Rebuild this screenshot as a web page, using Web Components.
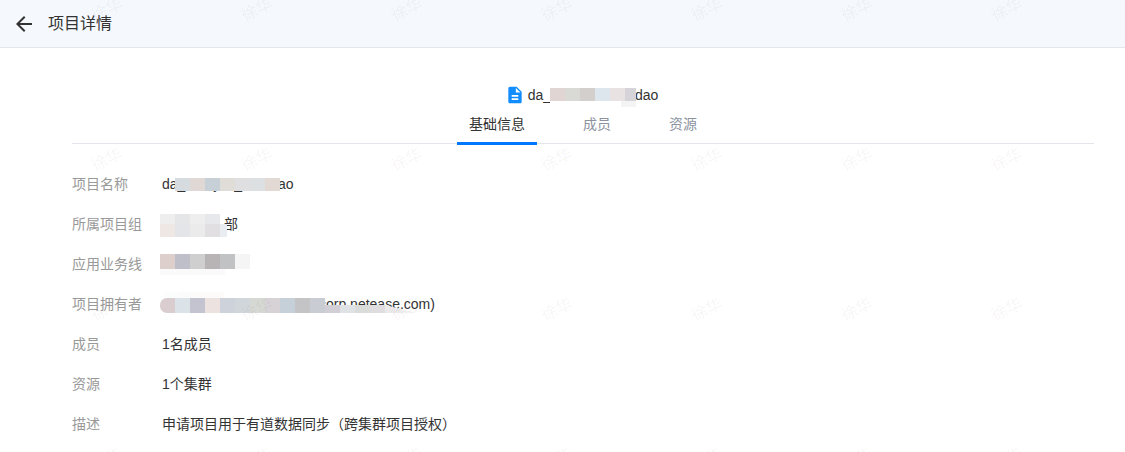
<!DOCTYPE html>
<html lang="zh-CN">
<head>
<meta charset="utf-8">
<title>项目详情</title>
<style>
  html, body {
    margin: 0;
    padding: 0;
    background: #fff;
    font-family: "Liberation Sans", "Noto Sans CJK SC", sans-serif;
    font-size: 14px;
    line-height: 20px;
    color: #333;
  }
  body { position: relative; height: 452px; overflow: hidden; }
</style>
</head>
<body>
  <page-header>项目详情</page-header>
  <detail-page>
    <project-title>
      da_xxxxyxx_xxxx<span style="margin-left:-1px">dao</span><mosaic-mask x="22" y="-7" h="13" colors="#e0d5d2,#d9d9d6,#d3cfcd,#dce6ec,#e8e3e2,#d6d4d8" w="86" strip="6" stripbg="linear-gradient(to right,#fff 0,#fff 82%,#f4f4f4 82%,#f4f4f4 100%)"></mosaic-mask>
    </project-title>
    <tab-bar>
      <tab-item active>基础信息</tab-item>
      <tab-item>成员</tab-item>
      <tab-item>资源</tab-item>
    </tab-bar>
    <info-list>
      <info-row label="项目名称">da_xxxxyxx_xxxxdao<mosaic-mask x="13" y="-6" h="13" colors="#d5dbdf,#dfd8d5,#c7d0d7,#e0dcd8,#dfdee0,#dde0e2,#e2d9d4"></mosaic-mask></info-row>
      <info-row label="所属项目组"><span style="margin-left:62px">部</span><mosaic-mask x="-2" y="-10" h="10" colors="#eeeeee,#e5e6e8,#eeeeee,#e6e8eb"></mosaic-mask><mosaic-mask x="-2" y="0" h="13" w="67" colors="#efe7e3,#e3e5e8,#ebebec,#e2dfe2,#e9ecf1"></mosaic-mask></info-row>
      <info-row label="应用业务线"><mosaic-mask x="-2" y="-10" h="15" strip="6" stripbg="#fafafa" stripw="65" colors="#dccfcc,#bfbfc9,#cfcfcf,#b8b3b5,#c1c2c4,#f5f5f5"></mosaic-mask></info-row>
      <info-row label="项目拥有者"><span style="margin-left:157px">corp.netease.com)</span><mosaic-mask x="2" y="-12" h="6" colors="#fbfcfc,#fbfbfb,#fcfbfa,#fcfbfa"></mosaic-mask><mosaic-mask x="-2" y="-6" h="15" round colors="#d9cdcf,#dbe3e9,#c4c4d0,#ece2e0,#ced3db,#d0d6da,#d6d8d3,#d6d2d6,#c6d0d9,#c4c4c6,#c9cdd3"></mosaic-mask><mosaic-mask x="163" y="1" h="8" w="92" clip="polygon(0 0,100% 0,100% 0,65% 0,100% 100%,0 100%)" colors="#d2ced6,#dfe3e6,#d9dcd9,#e0dde1,#ebe9ea,#f3f2f3,#fafafa"></mosaic-mask></info-row>
      <info-row label="成员">1名成员</info-row>
      <info-row label="资源">1个集群</info-row>
      <info-row label="描述">申请项目用于有道数据同步（跨集群项目授权）</info-row>
    </info-list>
  </detail-page>
  <water-mark text="徐华"></water-mark>

<script>
class PageHeader extends HTMLElement {
  constructor() {
    super();
    this.attachShadow({ mode: "open" }).innerHTML = `
      <style>
        :host {
          display: flex;
          align-items: center;
          gap: 12px;
          box-sizing: border-box;
          height: 48px;
          padding-left: 12px;
          background: #f5f8fc;
          border-bottom: 1px solid #e3e6ea;
          font-size: 16px;
          line-height: 22px;
          color: #333;
        }
        svg { width: 24px; height: 24px; fill: #333; display: block; }
      </style>
      <svg viewBox="0 0 24 24"><path d="M20 11H7.83l5.59-5.59L12 4l-8 8 8 8 1.41-1.41L7.83 13H20v-2z"/></svg>
      <slot></slot>
    `;
  }
}

class DetailPage extends HTMLElement {
  constructor() {
    super();
    this.attachShadow({ mode: "open" }).innerHTML = `
      <style>
        :host { display: block; padding: 35px 31px 0 72px; }
      </style>
      <slot></slot>
    `;
  }
}

class ProjectTitle extends HTMLElement {
  constructor() {
    super();
    this.attachShadow({ mode: "open" }).innerHTML = `
      <style>
        :host {
          display: flex;
          justify-content: center;
          align-items: center;
          gap: 2.3px;
          height: 24px;
          color: #333;
        }
        svg { width: 20px; height: 20px; fill: #128dff; display: block; margin-left: -2.3px; }
        .name { position: relative; white-space: nowrap; }
      </style>
      <svg viewBox="0 0 24 24"><path d="M14 2H6c-1.1 0-2 .9-2 2v16c0 1.1.9 2 2 2h12c1.1 0 2-.9 2-2V8l-6-6zm2 16H8v-2h8v2zm0-4H8v-2h8v2zm-3-5V3.5L18.5 9H13z"/></svg>
      <span class="name"><slot></slot></span>
    `;
  }
}

class TabBar extends HTMLElement {
  constructor() {
    super();
    this.attachShadow({ mode: "open" }).innerHTML = `
      <style>
        :host {
          display: flex;
          justify-content: center;
          align-items: flex-start;
          gap: 34px;
          height: 36px;
          border-bottom: 1px solid #e4e6eb;
        }
      </style>
      <slot></slot>
    `;
  }
}

class TabItem extends HTMLElement {
  constructor() {
    super();
    this.attachShadow({ mode: "open" }).innerHTML = `
      <style>
        :host {
          display: block;
          box-sizing: border-box;
          height: 38px;
          line-height: 34px;
          padding: 0 12px;
          border-bottom: 3px solid transparent;
          color: #8c93a0;
        }
        :host([active]) {
          color: #333;
          border-bottom-color: #0077ff;
        }
      </style>
      <slot></slot>
    `;
  }
}

class InfoList extends HTMLElement {
  constructor() {
    super();
    this.attachShadow({ mode: "open" }).innerHTML = `
      <style>
        :host { display: block; margin-top: 20px; }
      </style>
      <slot></slot>
    `;
  }
}

class InfoRow extends HTMLElement {
  constructor() {
    super();
    this.attachShadow({ mode: "open" }).innerHTML = `
      <style>
        :host {
          display: grid;
          grid-template-columns: 90px 1fr;
          align-items: center;
          height: 40px;
        }
        .label { color: #999; }
        .value { position: relative; min-height: 20px; color: #333; white-space: nowrap; }
      </style>
      <div class="label"></div>
      <div class="value"><slot></slot></div>
    `;
    this.shadowRoot.querySelector(".label").textContent = this.getAttribute("label");
  }
}

// pixelated block that lies over the text, like the redaction in the shot
class MosaicMask extends HTMLElement {
  connectedCallback() {
    const colors = this.getAttribute("colors").split(",");
    const h = this.getAttribute("h") || 14;
    const w = this.getAttribute("w") || colors.length * 15;
    const strip = this.getAttribute("strip");
    const stripw = this.getAttribute("stripw") || w;
    const clip = this.getAttribute("clip");
    const cells = colors.map(c => `<i style="background:${c};height:${h}px"></i>`).join("");
    const below = strip
      ? `<b style="height:${strip}px;width:${stripw}px;background:${this.getAttribute("stripbg")}"></b>`
      : "";
    this.attachShadow({ mode: "open" }).innerHTML = `
      <style>
        :host {
          position: absolute;
          left: ${this.getAttribute("x")}px;
          top: calc(50% + ${this.getAttribute("y")}px);
          display: block;
          width: ${w}px;
          overflow: hidden;
          pointer-events: none;
          ${clip ? `clip-path: ${clip};` : ""}
        }
        :host([round]) { border-radius: 7px 0 0 7px; }
        .row { display: flex; }
        i { display: block; width: 15px; flex: none; }
        b { display: block; }
      </style>
      <div class="row">${cells}</div>${below}
    `;
  }
}

class WaterMark extends HTMLElement {
  connectedCallback() {
    const text = this.getAttribute("text");
    let cells = "";
    for (let i = 0; i < 28; i++) cells += `<span>${text}</span>`;
    this.attachShadow({ mode: "open" }).innerHTML = `
      <style>
        :host {
          position: absolute;
          inset: 0;
          overflow: hidden;
          pointer-events: none;
        }
        .grid {
          display: grid;
          grid-template-columns: repeat(7, 150px);
          grid-auto-rows: 150px;
          margin: -65px 0 0 32px;
        }
        span {
          display: flex;
          align-items: center;
          justify-content: center;
          transform: rotate(-25deg);
          font-size: 16px;
          color: rgba(0, 0, 0, 0.05);
        }
      </style>
      <div class="grid">${cells}</div>
    `;
  }
}

customElements.define("page-header", PageHeader);
customElements.define("detail-page", DetailPage);
customElements.define("project-title", ProjectTitle);
customElements.define("tab-bar", TabBar);
customElements.define("tab-item", TabItem);
customElements.define("info-list", InfoList);
customElements.define("info-row", InfoRow);
customElements.define("mosaic-mask", MosaicMask);
customElements.define("water-mark", WaterMark);
</script>
</body>
</html>
